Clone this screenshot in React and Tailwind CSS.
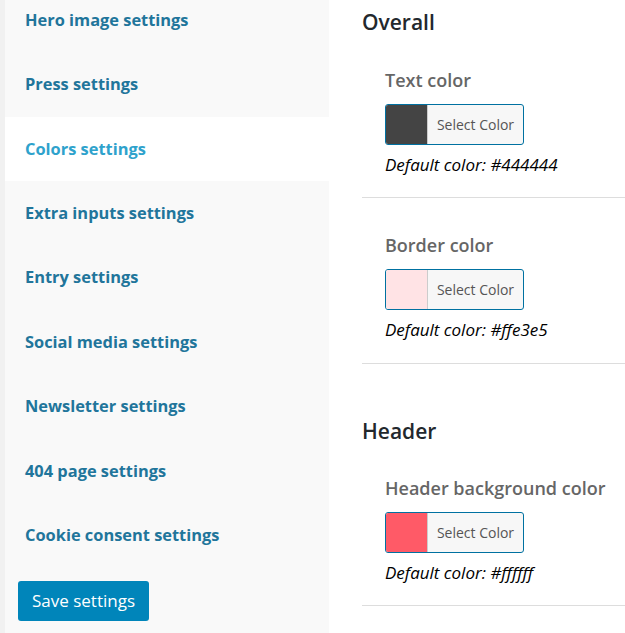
import React from 'react';

const navItems = [
  'Hero image settings',
  'Press settings',
  'Colors settings',
  'Extra inputs settings',
  'Entry settings',
  'Social media settings',
  'Newsletter settings',
  '404 page settings',
  'Cookie consent settings',
];

function ColorField({ label, swatch, defaultColor, className }) {
  return (
    <div className={`border-b border-[#dddddd] pl-[23px] ${className}`}>
      <div className="text-[18px] leading-[24px] font-semibold text-[#666666]">{label}</div>
      <button
        type="button"
        className="mt-[12px] flex h-[41px] w-[139px] overflow-hidden rounded-[3px] border border-[#0071a1] bg-[#f7f7f7]"
      >
        <span className="h-full w-[42px] border-r border-[#cccccc]" style={{ backgroundColor: swatch }} />
        <span className="flex flex-1 items-center justify-center text-[14px] text-[#555555]">Select Color</span>
      </button>
      <div className="mt-[8px] text-[17px] leading-[24px] italic text-[#000000]">
        Default color: {defaultColor}
      </div>
    </div>
  );
}

export default function App() {
  return (
    <div
      className="flex h-[633px] w-[625px] overflow-hidden bg-white"
      style={{ fontFamily: '"Open Sans", "Noto Sans", sans-serif' }}
    >
      <div className="w-[5px] shrink-0 bg-[#f1f1f1]" />
      <div className="flex w-[324px] shrink-0 flex-col bg-[#f9f9f9]">
        <ul className="-mt-[12px]">
          {navItems.map((item) => {
            const active = item === 'Colors settings';
            return (
              <li
                key={item}
                className={`flex h-[64.4px] items-center pl-[20px] text-[16.4px] font-bold ${
                  active ? 'bg-white text-[#2ea2cc]' : 'text-[#21759b]'
                }`}
              >
                {item}
              </li>
            );
          })}
        </ul>
        <div className="pl-[13px] pt-[13px]">
          <button
            type="button"
            className="h-[40px] w-[131px] rounded-[3px] bg-[#0085ba] text-[17px] text-white"
          >
            Save settings
          </button>
        </div>
      </div>
      <div className="flex-1 pl-[33px]">
        <h2 className="mt-[6px] text-[21px] leading-[32px] font-semibold text-[#23282d]">Overall</h2>
        <ColorField label="Text color" swatch="#444444" defaultColor="#444444" className="mt-[30px] pb-[20px]" />
        <ColorField label="Border color" swatch="#ffe3e5" defaultColor="#ffe3e5" className="mt-[35px] pb-[21px]" />
        <h2 className="mt-[51px] text-[21px] leading-[32px] font-semibold text-[#23282d]">Header</h2>
        <ColorField
          label="Header background color"
          swatch="#ff5a67"
          defaultColor="#ffffff"
          className="mt-[29px] pb-[20px]"
        />
      </div>
    </div>
  );
}
